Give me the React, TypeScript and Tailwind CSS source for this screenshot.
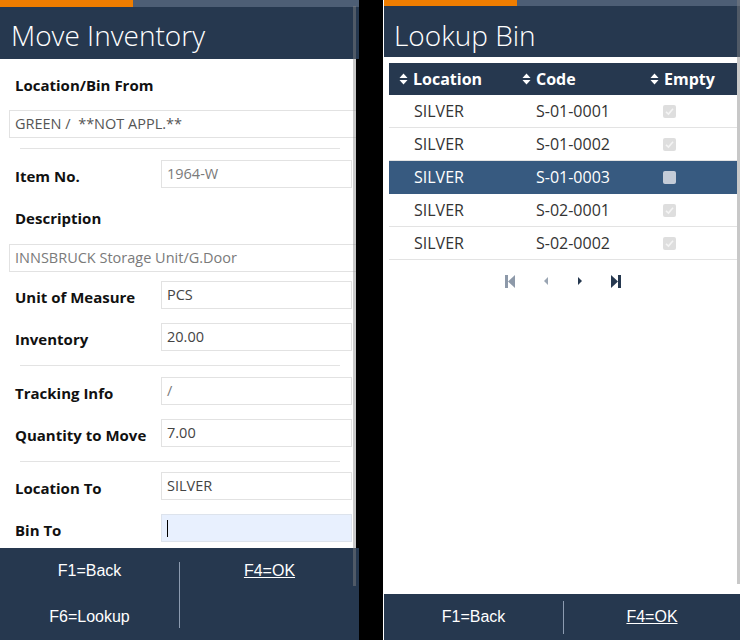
import React from 'react';

const NAVY = 'bg-[#26384f]';

const rows = [
  { loc: 'SILVER', code: 'S-01-0001', empty: true },
  { loc: 'SILVER', code: 'S-01-0002', empty: true },
  { loc: 'SILVER', code: 'S-01-0003', empty: false },
  { loc: 'SILVER', code: 'S-02-0001', empty: true },
  { loc: 'SILVER', code: 'S-02-0002', empty: true },
];

const SortIcon = () => (
  <svg width="9" height="14" viewBox="0 0 9 14" className="shrink-0">
    <path d="M0.5 6 L4.5 1.5 L8.5 6 Z" fill="#fff" />
    <path d="M0.5 8 L4.5 12.5 L8.5 8 Z" fill="#fff" />
  </svg>
);

const Checkbox = ({ checked, selected }: { checked: boolean; selected: boolean }) => (
  <div
    className={`w-[13px] h-[13px] rounded-[2px] flex items-center justify-center ${
      selected ? 'bg-[#c4ccd8]' : 'bg-[#dedede]'
    }`}
  >
    {checked && (
      <svg width="9" height="9" viewBox="0 0 9 9">
        <path d="M1 4.8 L3.5 7 L8 1.8" stroke="#f4f4f4" strokeWidth="1.6" fill="none" />
      </svg>
    )}
  </div>
);

// one label + input line of the form
const FieldRow = ({ label, value, readOnly, focused, className = '' }: {
  label: string; value: string; readOnly?: boolean; focused?: boolean; className?: string;
}) => (
  <div className={`flex items-center h-[28px] ${className}`}>
    <div className="w-[161px] pl-[15px] mt-[4px] text-[15px] font-bold text-[#111] whitespace-nowrap">{label}</div>
    <div
      className={`w-[191px] h-[28px] border flex items-center px-[5px] text-[14.5px] ${
        focused ? 'bg-[#e8f0fe] border-[#dde3ec]' : 'bg-white border-[#e2e2e2]'
      } ${readOnly ? 'text-[#7a7a7a]' : 'text-[#444]'}`}
    >
      {focused ? <span className="w-px h-[17px] bg-black" /> : value}
    </div>
  </div>
);

const Divider = ({ className = '' }: { className?: string }) => (
  <div className={`mx-[20px] w-[320px] h-px bg-[#e3e3e3] ${className}`} />
);

export default function App() {
  return (
    <div className="w-[740px] h-[640px] bg-black flex overflow-hidden" style={{ fontFamily: '"Open Sans", sans-serif' }}>
      {/* Move Inventory */}
      <div className="w-[359px] h-full flex flex-col relative">
        <div className="h-[7px] flex">
          <div className="w-[133px] bg-[#ef7d00]" />
          <div className="flex-1 bg-[#4d5e75]" />
        </div>
        <div className={`h-[52px] ${NAVY} pl-[11px] pt-[4px] flex items-center`}>
          <h1 className="text-[28px] font-light text-white leading-none">Move Inventory</h1>
        </div>
        <div className="w-[356px] h-[489px] bg-white overflow-hidden flex flex-col">
          <div className="mt-[16px] pl-[15px] h-[20px] leading-[20px] text-[15px] font-bold text-[#111]">Location/Bin From</div>
          <div className="mt-[15px] ml-[9px] w-[360px] h-[28px] border border-[#e2e2e2] flex items-center px-[5px] text-[14.5px] text-[#555] whitespace-pre">
            GREEN /  **NOT APPL.**
          </div>
          <Divider className="mt-[10px]" />
          <FieldRow label="Item No." value="1964-W" readOnly className="mt-[11px]" />
          <div className="mt-[20px] pl-[15px] h-[20px] leading-[20px] text-[15px] font-bold text-[#111]">Description</div>
          <div className="mt-[16px] ml-[9px] w-[360px] h-[28px] border border-[#e2e2e2] flex items-center px-[5px] text-[14.5px] text-[#7a7a7a]">
            INNSBRUCK Storage Unit/G.Door
          </div>
          <FieldRow label="Unit of Measure" value="PCS" className="mt-[9px]" />
          <FieldRow label="Inventory" value="20.00" className="mt-[14px]" />
          <Divider className="mt-[14px]" />
          <FieldRow label="Tracking Info" value="/" readOnly className="mt-[11px]" />
          <FieldRow label="Quantity to Move" value="7.00" className="mt-[14px]" />
          <Divider className="mt-[14px]" />
          <FieldRow label="Location To" value="SILVER" className="mt-[10px]" />
          <FieldRow label="Bin To" value="" focused className="mt-[14px]" />
        </div>
        <div className={`h-[92px] ${NAVY} grid grid-cols-[179px_1fr] text-white text-[16px]`} style={{ fontFamily: '"Liberation Sans", Arial, sans-serif' }}>
          <div className="flex flex-col">
            <div className="h-[46px] flex items-center justify-center">F1=Back</div>
            <div className="h-[46px] flex items-center justify-center">F6=Lookup</div>
          </div>
          <div className="mt-[14px] h-[66px] border-l border-[#8c9bb0]">
            <div className="-mt-[14px] h-[46px] flex items-center justify-center underline">F4=OK</div>
          </div>
        </div>
        {/* scrollbar */}
        <div className="absolute left-[353px] top-[6px] w-[3px] h-[580px] bg-[rgba(133,133,133,0.45)]" />
      </div>

      {/* Lookup Bin */}
      <div className="ml-[24px] w-[357px] h-full border-l border-white flex flex-col relative">
        <div className="h-[6px] flex">
          <div className="w-[133px] bg-[#ef7d00]" />
          <div className="flex-1 bg-[#4d5e75]" />
        </div>
        <div className={`h-[51px] ${NAVY} pl-[10px] pt-[6px] flex items-center`}>
          <h1 className="text-[28px] font-light text-white leading-none">Lookup Bin</h1>
        </div>
        <div className="flex-1 bg-white flex flex-col">
          <div className="mt-[6px] ml-[5px] w-[348px]">
            <div className={`h-[32px] ${NAVY} grid grid-cols-[123px_128px_1fr] items-center text-white text-[16px] font-bold`}>
              {['Location', 'Code', 'Empty'].map((h) => (
                <div key={h} className="pl-[10px] flex items-center gap-[5px]">
                  <SortIcon />
                  <span>{h}</span>
                </div>
              ))}
            </div>
            {rows.map((r, i) => {
              const sel = i === 2;
              return (
                <div
                  key={r.code}
                  className={`h-[33px] grid grid-cols-[123px_128px_1fr] items-center text-[16px] ${
                    sel ? 'bg-[#375a80] text-white border-b border-[#375a80]' : 'text-[#333] border-b border-[#e3e3e3]'
                  }`}
                >
                  <div className="pl-[25px]">{r.loc}</div>
                  <div className="pl-[24px]">{r.code}</div>
                  <div className="pl-[23px]">
                    <Checkbox checked={r.empty} selected={sel} />
                  </div>
                </div>
              );
            })}
            <div className="mt-[14px] h-[14px] flex items-center justify-center gap-[28px]">
              <svg width="10" height="13" viewBox="0 0 10 13">
                <rect x="0" y="0" width="3" height="13" fill="#8d99a9" />
                <path d="M3 6.5 L10 0 L10 13 Z" fill="#8d99a9" />
              </svg>
              <svg width="6" height="8" viewBox="0 0 6 8">
                <path d="M1 4 L5 0 L5 8 Z" fill="#9aa5b3" />
              </svg>
              <svg width="6" height="8" viewBox="0 0 6 8">
                <path d="M1 0 L5 4 L1 8 Z" fill="#26384f" />
              </svg>
              <svg width="10" height="13" viewBox="0 0 10 13">
                <path d="M0 0 L7 6.5 L0 13 Z" fill="#26384f" />
                <rect x="7" y="0" width="3" height="13" fill="#26384f" />
              </svg>
            </div>
          </div>
        </div>
        <div className={`h-[46px] ${NAVY} grid grid-cols-[179px_1fr] text-white text-[16px]`} style={{ fontFamily: '"Liberation Sans", Arial, sans-serif' }}>
          <div className="flex items-center justify-center">F1=Back</div>
          <div className="mt-[7px] h-[33px] border-l border-[#8c9bb0]">
            <div className="-mt-[7px] h-[46px] flex items-center justify-center underline">F4=OK</div>
          </div>
        </div>
        <div className="absolute right-0 top-0 w-[3px] h-[584px] bg-[rgba(133,133,133,0.45)]" />
      </div>
    </div>
  );
}
